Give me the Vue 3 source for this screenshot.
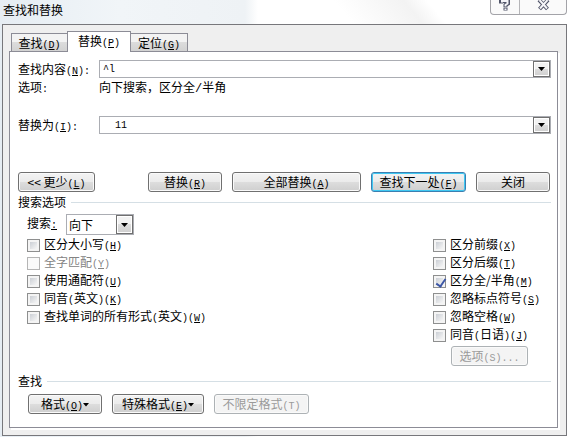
<script setup>
    import {ref} from 'vue';

    const tabs = [
        {text: '查找', key: 'D'},
        {text: '替换', key: 'P'},
        {text: '定位', key: 'G'},
    ];
    const active_tab = ref('P');

    const find_text = ref('^l');
    const replace_text = ref('  11');
    const direction = ref('向下');

    const left_options = ref([
        {id: 'case', text: '区分大小写', key: 'H', checked: false},
        {id: 'whole', text: '全字匹配', key: 'Y', checked: false, disabled: true},
        {id: 'wildcard', text: '使用通配符', key: 'U', checked: false},
        {id: 'sound_en', text: '同音', note: '英文', key: 'K', checked: false},
        {id: 'forms', text: '查找单词的所有形式', note: '英文', key: 'W', checked: false},
    ]);

    const right_options = ref([
        {id: 'prefix', text: '区分前缀', key: 'X', checked: false},
        {id: 'suffix', text: '区分后缀', key: 'T', checked: false},
        {id: 'width', text: '区分全/半角', key: 'M', checked: true},
        {id: 'punct', text: '忽略标点符号', key: 'S', checked: false},
        {id: 'space', text: '忽略空格', key: 'W', checked: false},
        {id: 'sound_jp', text: '同音', note: '日语', key: 'J', checked: false},
    ]);
</script>

<template>
    <div class="window">
        <header class="titlebar">
            <h1>查找和替换</h1>
            <div class="caption">
                <button class="help" aria-label="帮助">
                    <svg width="12" height="12" viewBox="0 0 12 12">
                        <g fill="none">
                            <path class="dark" d="M2 3.500V1H9V3.500L6.500 5V7.500M6.500 8V10.500" />
                            <path class="light" d="M3 2.500V1H8.500V3.500L6.500 5V6.500M6.500 8.500V10" />
                        </g>
                    </svg>
                </button>
                <button class="close" aria-label="关闭窗口">
                    <svg width="13" height="12" viewBox="0 0 13 12">
                        <g fill="none">
                            <path class="dark" d="M2 0L10.500 9M11 0L2.500 9" />
                            <path class="light" d="M2.500 0L10 8.500M10.500 0L3 8.500" />
                        </g>
                    </svg>
                </button>
            </div>
        </header>

        <main class="dialog">
            <nav class="tabs" role="tablist">
                <button v-for="tab in tabs" :key="tab.key" role="tab" class="tab"
                    :class="{active: tab.key === active_tab}" :aria-selected="tab.key === active_tab"
                    @click="active_tab = tab.key">{{ tab.text }}<span class="key">(<u>{{ tab.key }}</u>)</span></button>
            </nav>

            <section class="panel">
                <div class="field">
                    <label for="find_text">查找内容<span class="key">(<u>N</u>):</span></label>
                    <div class="combo">
                        <input id="find_text" type="text" v-model="find_text">
                        <button class="drop" aria-label="查找记录">
                            <svg width="7" height="4" viewBox="0 0 7 4"><path d="M0 0H7L3.500 4Z" /></svg>
                        </button>
                    </div>
                </div>
                <div class="field summary">
                    <span class="name">选项<span class="key">:</span></span>
                    <span>向下搜索，区分全<span class="key slash">/</span>半角</span>
                </div>
                <div class="field replace">
                    <label for="replace_text">替换为<span class="key">(<u>I</u>):</span></label>
                    <div class="combo">
                        <input id="replace_text" type="text" v-model="replace_text">
                        <button class="drop" aria-label="替换记录">
                            <svg width="7" height="4" viewBox="0 0 7 4"><path d="M0 0H7L3.500 4Z" /></svg>
                        </button>
                    </div>
                </div>

                <div class="actions">
                    <button class="btn less">&lt;&lt; 更少<span class="key">(<u>L</u>)</span></button>
                    <button class="btn">替换<span class="key">(<u>R</u>)</span></button>
                    <button class="btn all">全部替换<span class="key">(<u>A</u>)</span></button>
                    <button class="btn next">查找下一处<span class="key">(<u>F</u>)</span></button>
                    <button class="btn">关闭</button>
                </div>

                <h2>搜索选项</h2>
                <div class="direction">
                    <label for="direction">搜索<span class="key"><u>:</u></span></label>
                    <div class="combo small">
                        <select id="direction" v-model="direction">
                            <option>向下</option>
                            <option>向上</option>
                            <option>全部</option>
                        </select>
                        <span class="drop">
                            <svg width="7" height="4" viewBox="0 0 7 4"><path d="M0 0H7L3.500 4Z" /></svg>
                        </span>
                    </div>
                </div>

                <div class="options">
                    <div class="column">
                        <label v-for="opt in left_options" :key="opt.id" :class="{disabled: opt.disabled}">
                            <input type="checkbox" v-model="opt.checked" :disabled="opt.disabled">
                            <span>{{ opt.text }}<template v-if="opt.note"><span class="key">(</span>{{ opt.note }}<span class="key">)</span></template><span class="key">(<u>{{ opt.key }}</u>)</span></span>
                        </label>
                    </div>
                    <div class="column right">
                        <label v-for="opt in right_options" :key="opt.id">
                            <input type="checkbox" v-model="opt.checked">
                            <span>{{ opt.text }}<template v-if="opt.note"><span class="key">(</span>{{ opt.note }}<span class="key">)</span></template><span class="key">(<u>{{ opt.key }}</u>)</span></span>
                        </label>
                        <button class="btn more" disabled>选项<span class="key">(S)...</span></button>
                    </div>
                </div>

                <h2>查找</h2>
                <div class="formats">
                    <button class="btn format">格式<span class="key">(<u>O</u>)</span>
                        <svg width="6" height="4" viewBox="0 0 6 4"><path d="M0 0H6L3 3.500Z" /></svg>
                    </button>
                    <button class="btn special">特殊格式<span class="key">(<u>E</u>)</span>
                        <svg width="6" height="4" viewBox="0 0 6 4"><path d="M0 0H6L3 3.500Z" /></svg>
                    </button>
                    <button class="btn nofmt" disabled>不限定格式<span class="key">(T)</span></button>
                </div>
            </section>
        </main>
    </div>
</template>

<style>
    body
    {
        margin: 0;
        background: #fff;
    }
</style>

<style scoped>
    *
    {
        box-sizing: border-box;
    }
    .window
    {
        min-height: 100vh;
        padding: 0 2px 2px;
        background: linear-gradient(90deg, #e6edf3 0, #f1f5f8 120px, #eef2f5 245px, #fff 258px);
        font: 12px/18px "Noto Sans CJK SC", sans-serif;
        color: #000;
    }
    button, input, select
    {
        font: inherit;
        color: inherit;
        margin: 0;
        padding: 0;
    }
    /* latin parts take half the width of a chinese character */
    .key
    {
        font-family: "Liberation Mono", monospace;
        font-size: 10px;
        white-space: pre;
    }
    u
    {
        text-underline-offset: 1px;
    }
    .slash
    {
        font-size: 12px;
    }

    .titlebar
    {
        display: flex;
        justify-content: space-between;
        align-items: flex-start;
        height: 24px;
        padding-left: 1px;
        background: linear-gradient(50deg, transparent 60%, #f3f3f3 72%, transparent 76%);
    }
    h1
    {
        margin: 0;
        font-size: 12px;
        font-weight: normal;
        line-height: 20px;
    }
    .caption
    {
        display: flex;
        height: 15px;
        border: 1px solid #a3a3a8;
        border-top: 0;
        border-radius: 0 0 4px 4px;
        background: #fafafa;
        overflow: hidden;
    }
    .caption button
    {
        display: flex;
        justify-content: center;
        align-items: flex-start;
        border: 0;
        background: none;
    }
    .caption .help
    {
        width: 28px;
    }
    .caption .close
    {
        width: 47px;
        border-left: 1px solid #b5b5b8;
    }
    .dark
    {
        stroke: #505468;
        stroke-width: 4;
    }
    .light
    {
        stroke: #f5f5f8;
        stroke-width: 2;
    }

    .dialog
    {
        padding: 6px 8px 7px 6px;
        border: 1px solid #77777b;
        background: #efefef;
    }
    .tabs
    {
        display: flex;
        align-items: flex-end;
        padding-left: 2px;
    }
    .tab
    {
        width: 57px;
        height: 18px;
        border: 1px solid #8c8c96;
        border-bottom: 0;
        background: linear-gradient(#f3f3f3 50%, #dcdcdc 50%, #d2d2d2);
        line-height: 17px;
    }
    .tab + .tab
    {
        border-left: 0;
    }
    .tab.active
    {
        position: relative;
        width: 64px;
        height: 21px;
        margin: 0 0 -1px -1px;
        border-left: 1px solid #8c8c96;
        background: #fff;
    }

    .panel
    {
        padding: 8px 6px 13px 8px;
        border: 1px solid #8c8c96;
        box-shadow: 2px 2px #fff;
        background: #fff;
    }
    .field
    {
        display: flex;
        height: 18px;
    }
    .field label, .name
    {
        width: 81px;
    }
    .replace
    {
        margin-top: 20px;
    }
    .combo
    {
        position: relative;
        display: flex;
        flex: 1;
        border: 1px solid #abadb3;
        background: #fff;
    }
    .combo input
    {
        flex: 1;
        min-width: 0;
        padding-left: 3px;
        border: 0;
        outline: 0;
        background: none;
        font: 10px "Liberation Mono", monospace;
    }
    .drop
    {
        display: flex;
        align-items: center;
        justify-content: center;
        width: 17px;
        border: 1px solid #707070;
        background: linear-gradient(#f2f2f2 50%, #dddddd 50%, #cfcfcf);
        box-shadow: inset 0 0 0 1px #fff;
    }

    .actions
    {
        display: flex;
        justify-content: space-between;
        gap: 10px;
        margin-top: 38px;
        padding-right: 1px;
    }
    .btn
    {
        width: 74px;
        height: 20px;
        border: 1px solid #707070;
        border-radius: 3px;
        background: linear-gradient(#f3f3f3, #ebebeb 50%, #dddddd 50%, #cfcfcf);
        box-shadow: inset 0 0 0 1px #fafafa;
        line-height: 18px;
        white-space: nowrap;
    }
    .less
    {
        width: 77px;
        margin-right: auto;
    }
    .all
    {
        width: 129px;
    }
    .next
    {
        width: 95px;
        border-color: #3c7fb1;
        box-shadow: inset 0 0 0 1px #3fc8f2;
    }
    .btn:disabled
    {
        border-color: #adb2b5;
        background: #f4f4f4;
        color: #9a9a9a;
    }

    h2
    {
        display: flex;
        align-items: center;
        gap: 5px;
        margin: 0;
        font-size: 12px;
        font-weight: normal;
        line-height: 20px;
    }
    h2::after
    {
        content: "";
        flex: 1;
        height: 1px;
        background: #d5dfe5;
    }
    .direction
    {
        display: flex;
        align-items: center;
        padding: 2px 0 1px 9px;
    }
    .direction label
    {
        width: 39px;
    }
    .combo.small
    {
        flex: none;
        width: 68px;
        height: 21px;
    }
    select
    {
        flex: 1;
        appearance: none;
        padding-left: 2px;
        border: 0;
        outline: 0;
        background: none;
        line-height: 18px;
    }
    .small .drop
    {
        position: absolute;
        top: 0;
        right: 0;
        bottom: 0;
        pointer-events: none;
    }

    .options
    {
        display: flex;
        justify-content: space-between;
        padding-left: 9px;
    }
    .column
    {
        display: flex;
        flex-direction: column;
    }
    .column label
    {
        display: flex;
        align-items: center;
        gap: 4px;
        height: 18px;
    }
    .column.right
    {
        width: 118px;
    }
    .disabled
    {
        color: #838383;
    }
    input[type="checkbox"]
    {
        appearance: none;
        width: 13px;
        height: 13px;
        border: 1px solid #8e8f8f;
        background: linear-gradient(135deg, #cbcfd5, #f6f6f6) content-box, #f4f4f4;
        padding: 2px;
    }
    input[type="checkbox"]:disabled
    {
        border-color: #b5b5b5;
        background: #fafafa;
    }
    input[type="checkbox"]:checked::after
    {
        content: "";
        display: block;
        width: 4px;
        height: 8px;
        margin: -1px 0 0 2px;
        border: solid #3d57a6;
        border-width: 0 2px 2px 0;
        transform: rotate(35deg);
    }
    .more
    {
        width: 77px;
        margin: 2px 0 5px 18px;
    }

    .formats
    {
        display: flex;
        gap: 10px;
        padding: 3px 0 0 10px;
    }
    .formats svg
    {
        vertical-align: 2px;
    }
    .format
    {
        width: 74px;
    }
    .special
    {
        width: 92px;
    }
    .nofmt
    {
        width: 95px;
    }
</style>
